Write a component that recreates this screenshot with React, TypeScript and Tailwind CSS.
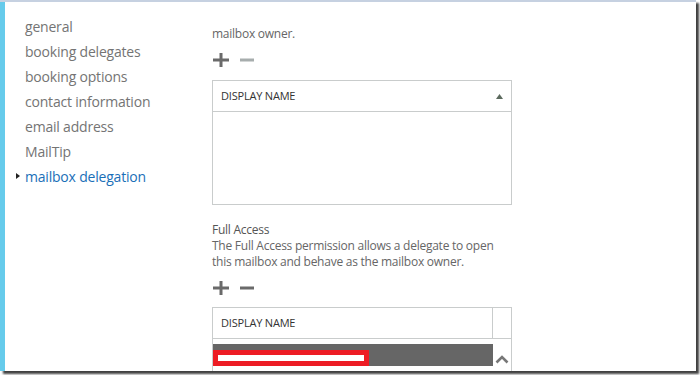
import React from "react";

const navItems = [
  "general",
  "booking delegates",
  "booking options",
  "contact information",
  "email address",
  "MailTip",
  "mailbox delegation",
];

function PlusMinus({ minusDisabled }: { minusDisabled?: boolean }) {
  return (
    <div className="flex items-center h-4 gap-[11px] pl-px">
      <svg width="16" height="14" viewBox="0 0 16 14">
        <rect x="0" y="5.5" width="16" height="3" fill="#6a6a6a" />
        <rect x="6.5" y="0" width="3" height="14" fill="#6a6a6a" />
      </svg>
      <svg width="14" height="14" viewBox="0 0 14 14">
        <rect x="0" y="5.5" width="14" height="3" fill={minusDisabled ? "#a7adad" : "#6a6a6a"} />
      </svg>
    </div>
  );
}

export default function App() {
  return (
    <div className="w-[700px] h-[375px] bg-white overflow-hidden">
      <div
        className="w-[696px] h-[371px] bg-white border-t-2 border-[#c6d1e1] flex shadow-[3px_3px_2px_rgba(0,0,0,0.75)] overflow-hidden"
        style={{ fontFamily: '"Open Sans", sans-serif' }}
      >
        {/* accent bar */}
        <div className="w-[5px] bg-[#66cbeb] shrink-0" />

        {/* navigation */}
        <ul className="w-[207px] shrink-0 pt-[12px] text-[14px] leading-[25px] text-[#747474] tracking-[-0.2px]">
          {navItems.map((item, i) => {
            const active = i === navItems.length - 1;
            return (
              <li key={item} className="relative pl-5">
                {active && (
                  <span className="absolute left-[11px] top-[9px] w-0 h-0 border-y-[3.5px] border-y-transparent border-l-[4px] border-l-[#222]" />
                )}
                <span className={active ? "text-[#1a6fb8]" : ""}>{item}</span>
              </li>
            );
          })}
        </ul>

        {/* content */}
        <div className="flex-1 pt-[24px] text-[12px] leading-4 text-[#666] tracking-[-0.25px]">
          <p>mailbox owner.</p>

          <div className="mt-[10px]">
            <PlusMinus minusDisabled />
          </div>

          <div className="mt-[12px] w-[300px] h-[125px] border border-[#c9cccc]">
            <div className="h-[31px] border-b border-[#c9cccc] flex items-center justify-between pl-2 pr-[8px] text-[11px] text-[#333] tracking-[-0.2px]">
              <span>DISPLAY NAME</span>
              <svg width="7" height="5" viewBox="0 0 7 5">
                <path d="M3.5 0 L7 5 L0 5 Z" fill="#5c6a5e" />
              </svg>
            </div>
          </div>

          <p className="mt-[17px] text-[#555]">Full Access</p>
          <p className="w-[300px]">
            The Full Access permission allows a delegate to open this mailbox and behave as the mailbox owner.
          </p>

          <div className="mt-[10px]">
            <PlusMinus />
          </div>

          <div className="mt-[11px] w-[300px] h-[80px] border border-[#c9cccc] border-b-0">
            <div className="h-[31px] border-b border-[#c9cccc] flex">
              <div className="flex-1 flex items-center pl-2 text-[11px] text-[#333] tracking-[-0.2px] border-r border-[#c9cccc]">
                DISPLAY NAME
              </div>
              <div className="w-[18px]" />
            </div>
            <div className="flex pt-[5px]">
              <div className="w-[280px] h-[22px] bg-[#666] pt-[6px]">
                <div className="w-[156px] h-4 border-[5px] border-[#ed1c24] bg-white" />
              </div>
              <div className="flex-1 flex justify-center items-end pb-[2px]">
                <svg width="14" height="9" viewBox="0 0 14 9">
                  <path d="M1.5 7.5 L7 2 L12.5 7.5" stroke="#777" strokeWidth="2.6" fill="none" />
                </svg>
              </div>
            </div>
          </div>
        </div>
      </div>
    </div>
  );
}
